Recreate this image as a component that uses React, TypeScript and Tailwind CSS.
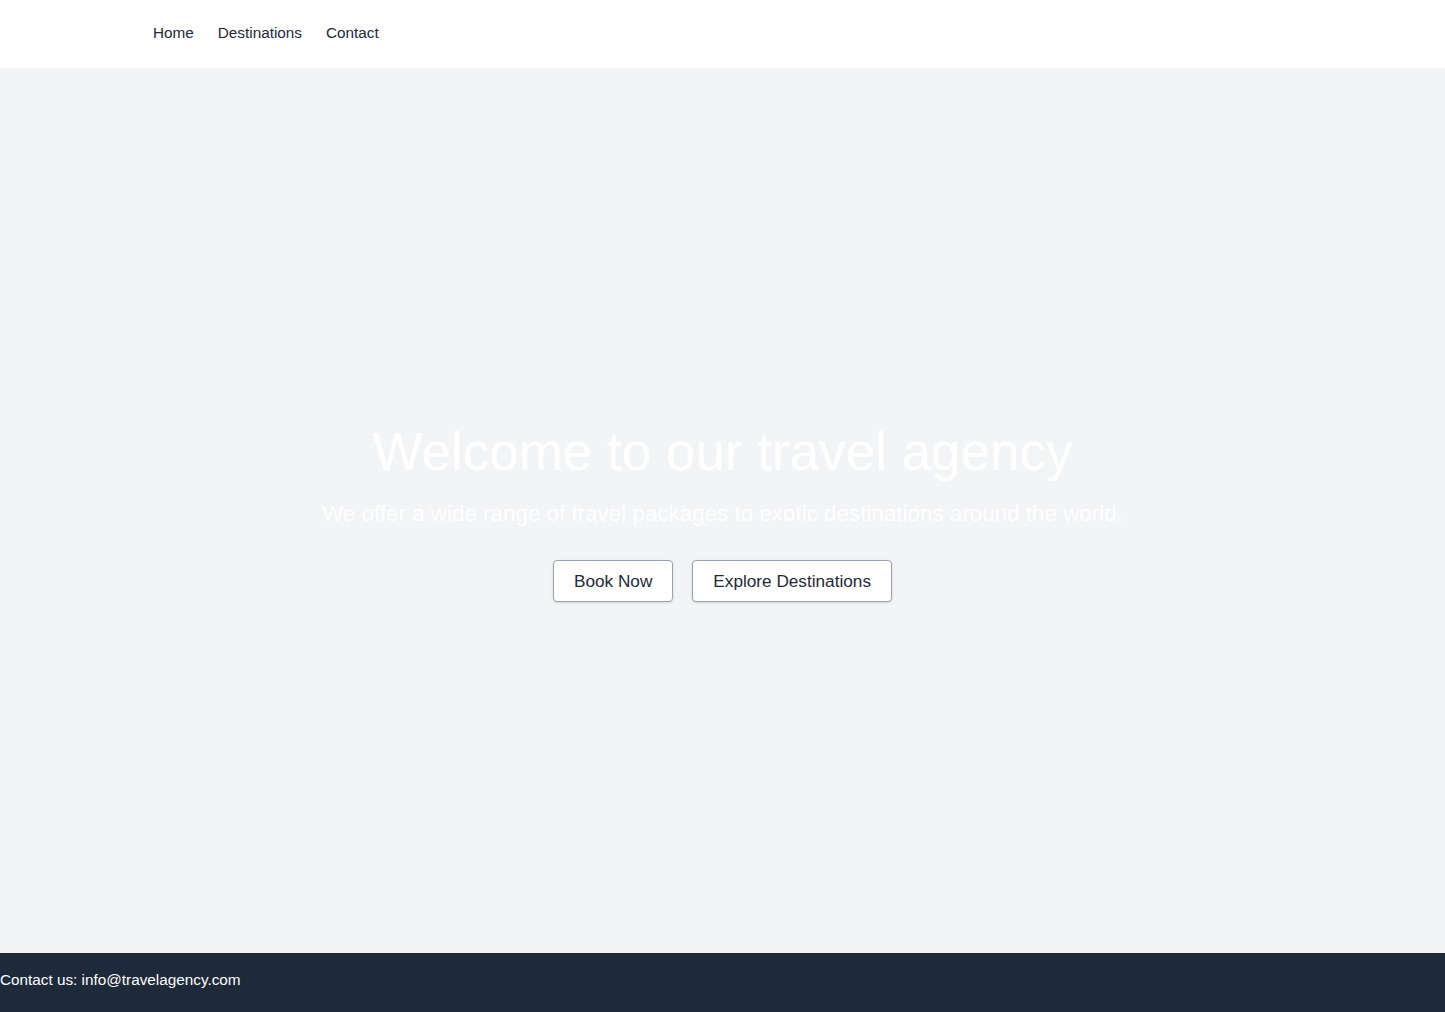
export default function App() {
  return (
    <div
      className="flex min-h-screen flex-col bg-gray-100"
      style={{ fontFamily: '"Liberation Sans", Arial, sans-serif' }}
    >
      <nav className="h-[68px] bg-white">
        <ul className="flex h-full items-center gap-6 pb-0.5 pl-[153px] text-[15.3px] text-gray-800">
          <li>
            <a href="#">Home</a>
          </li>
          <li>
            <a href="#">Destinations</a>
          </li>
          <li>
            <a href="#">Contact</a>
          </li>
        </ul>
      </nav>

      <main className="flex h-[885px] flex-col items-center justify-center text-center">
        <h1 className="text-[53px] leading-tight font-light text-white">
          Welcome to our travel agency
        </h1>
        <p className="mt-3 text-[22.4px] text-white">
          We offer a wide range of travel packages to exotic destinations around the world.
        </p>
        <div className="mt-[30px] flex gap-[19px]">
          <button className="h-[42px] rounded border border-gray-400 bg-white px-5 text-[17.2px] text-gray-800 shadow-sm">
            Book Now
          </button>
          <button className="h-[42px] rounded border border-gray-400 bg-white px-5 text-[17.2px] text-gray-800 shadow-sm">
            Explore Destinations
          </button>
        </div>
      </main>

      <footer className="flex h-[59px] items-center bg-gray-800 pb-1 text-[15.3px] text-white">
        <p>Contact us: info@travelagency.com</p>
      </footer>
    </div>
  );
}
